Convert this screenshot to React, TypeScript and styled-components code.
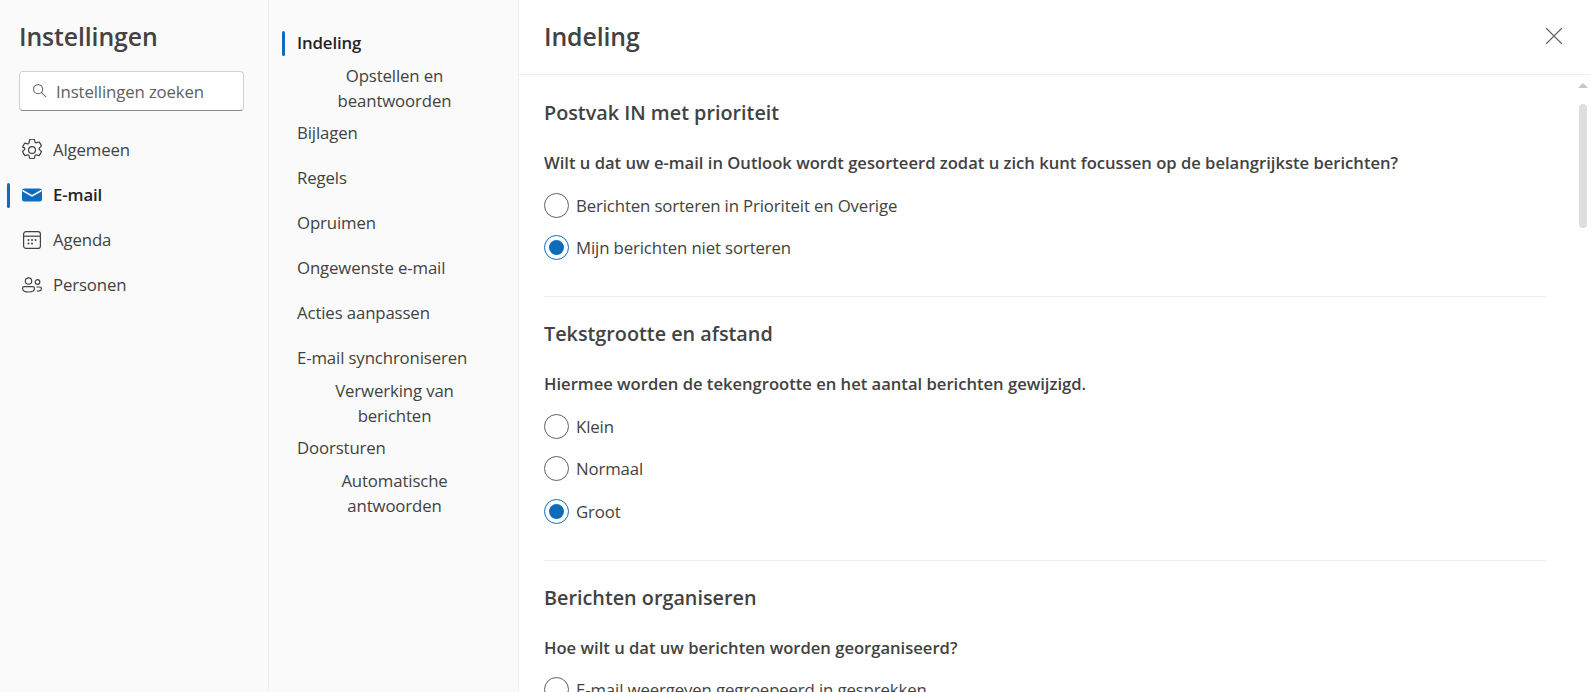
import React from "react";
import styled, { createGlobalStyle } from "styled-components";

const GlobalStyle = createGlobalStyle`
  html, body {
    margin: 0;
    padding: 0;
    height: 100%;
    overflow: hidden;
    background: #fff;
    font-family: "Open Sans", "Noto Sans", "Liberation Sans", sans-serif;
    color: #424242;
  }
  * { box-sizing: border-box; }
`;

const Page = styled.div`
  display: flex;
  width: 1591px;
  height: 692px;
  overflow: hidden;
`;

const Sidebar = styled.aside`
  width: 269px;
  flex-shrink: 0;
  background: #fafafa;
  border-right: 1px solid #eeeeee;
  padding: 19px 0 0 0;
`;

const SidebarTitle = styled.h1`
  margin: 0 0 18px 19px;
  font-size: 24.8px;
  line-height: 34px;
  font-weight: 600;
  color: #424242;
  letter-spacing: -0.1px;
`;

const SearchBox = styled.div`
  margin: 0 0 16px 19px;
  width: 225px;
  height: 40px;
  display: flex;
  align-items: center;
  gap: 9px;
  padding-left: 12px;
  background: #fff;
  border: 1px solid #d1d1d1;
  border-bottom-color: #8a8a8a;
  border-radius: 4px;
`;

const SearchPlaceholder = styled.span`
  font-size: 16.8px;
  letter-spacing: -0.13px;
  color: #616161;
`;

const NavRow = styled.div<{ $active?: boolean }>`
  position: relative;
  height: 45px;
  display: flex;
  align-items: center;
  gap: 10px;
  padding-left: 21px;
  font-size: 16.8px;
  letter-spacing: -0.13px;
  font-weight: ${(p) => (p.$active ? 600 : 400)};
  color: ${(p) => (p.$active ? "#242424" : "#424242")};
`;

const ActiveBar = styled.span<{ $left: number }>`
  position: absolute;
  left: ${(p) => p.$left}px;
  top: 50%;
  width: 3px;
  height: 25px;
  margin-top: -12px;
  border-radius: 2px;
  background: #0f6cbd;
`;

const IconSlot = styled.span`
  width: 22px;
  height: 22px;
  display: flex;
  flex-shrink: 0;
`;

const SubNav = styled.nav`
  width: 250px;
  flex-shrink: 0;
  background: #fafafa;
  border-right: 1px solid #eeeeee;
  padding: 20px 0 0 0;
`;

const SubRow = styled.div<{ $active?: boolean; $wrapped?: boolean }>`
  position: relative;
  width: 225px;
  height: 45px;
  margin-left: 13px;
  padding: ${(p) => (p.$wrapped ? "0 35px" : "0 0 0 15px")};
  display: flex;
  align-items: center;
  justify-content: ${(p) => (p.$wrapped ? "center" : "flex-start")};
  text-align: ${(p) => (p.$wrapped ? "center" : "left")};
  font-size: 16.8px;
  line-height: 25px;
  letter-spacing: -0.13px;
  font-weight: ${(p) => (p.$active ? 600 : 400)};
  color: ${(p) => (p.$active ? "#242424" : "#424242")};
`;

const Main = styled.main`
  flex: 1;
  min-width: 0;
  display: flex;
  flex-direction: column;
`;

const MainHeader = styled.header`
  height: 75px;
  flex-shrink: 0;
  display: flex;
  align-items: center;
  justify-content: space-between;
  padding: 0 27px 3px 25px;
  border-bottom: 1px solid #eeeeee;
`;

const MainTitle = styled.h2`
  margin: 0;
  font-size: 24.8px;
  font-weight: 600;
  letter-spacing: -0.1px;
  color: #424242;
`;

const Body = styled.div`
  flex: 1;
  min-height: 0;
  display: flex;
`;

const Content = styled.div`
  flex: 1;
  min-width: 0;
  overflow: hidden;
  padding: 24px 0 0 25px;
  margin-right: 29px;
`;

const Section = styled.section`
  padding-bottom: 27px;
  margin-bottom: 23px;
  border-bottom: 1px solid #eeeeee;

  &:last-child {
    border-bottom: 0;
  }
`;

const SectionTitle = styled.h3`
  margin: 0 0 24px;
  font-size: 19.8px;
  line-height: 28px;
  font-weight: 600;
  color: #424242;
`;

const Question = styled.p`
  margin: 0 0 9px;
  font-size: 16.6px;
  line-height: 24px;
  font-weight: 600;
  color: #424242;
`;

const Option = styled.label`
  height: 42.5px;
  display: flex;
  align-items: center;
  gap: 7px;
  font-size: 16.8px;
  letter-spacing: -0.13px;
  color: #424242;
`;

const RadioMark = styled.span<{ $checked?: boolean }>`
  width: 25px;
  height: 25px;
  flex-shrink: 0;
  border-radius: 50%;
  display: flex;
  align-items: center;
  justify-content: center;
  border: 1px solid ${(p) => (p.$checked ? "#0f6cbd" : "#616161")};

  &::after {
    content: "";
    display: ${(p) => (p.$checked ? "block" : "none")};
    width: 15px;
    height: 15px;
    border-radius: 50%;
    background: #0f6cbd;
  }
`;

const ScrollTrack = styled.div`
  width: 16px;
  flex-shrink: 0;
  display: flex;
  flex-direction: column;
  align-items: center;
  padding: 8px 4px 0 4px;
`;

const ScrollArrow = styled.span`
  width: 0;
  height: 0;
  flex-shrink: 0;
  border-left: 5px solid transparent;
  border-right: 5px solid transparent;
  border-bottom: 5px solid #c8c8c8;
  margin-bottom: 16px;
`;

const ScrollThumb = styled.span`
  width: 8px;
  height: 124px;
  flex-shrink: 0;
  border-radius: 4px;
  background: #dedede;
`;

const CloseButton = styled.button`
  width: 20px;
  height: 20px;
  padding: 0;
  border: 0;
  background: none;
  display: flex;
`;

const SearchIcon = () => (
  <svg width="15" height="15" viewBox="0 1 16 16" fill="none" stroke="#616161" strokeWidth="1.1">
    <circle cx="6.5" cy="6.5" r="4.8" />
    <path d="M10 10l4.6 4.6" strokeLinecap="round" />
  </svg>
);

const GearIcon = () => (
  <svg width="22" height="22" viewBox="2 1.500 18 19" fill="none" stroke="#424242" strokeWidth="1.050" strokeLinejoin="round">
    <path d="M9 1.800c1.300-.3 2.700-.3 4 0l.6 2.200c.1.500.8.900 1.300.7l2.200-.6c.9 1 1.600 2.200 2 3.500l-1.600 1.600c-.4.400-.4 1.100 0 1.500l1.600 1.600c-.4 1.300-1.100 2.500-2 3.500l-2.200-.6c-.5-.2-1.200.2-1.300.7l-.6 2.200c-1.300.3-2.700.3-4 0l-.6-2.200c-.1-.5-.8-.9-1.300-.7l-2.200.6c-.9-1-1.600-2.200-2-3.500l1.600-1.600c.4-.4.400-1.100 0-1.500L2.900 8.600c.4-1.300 1.100-2.500 2-3.500l2.200.6c.5.200 1.200-.2 1.300-.7z" />
    <circle cx="11" cy="11" r="3" />
  </svg>
);

const MailIcon = () => (
  <svg width="22" height="22" viewBox="0 0 22 22">
    <path d="M1 5.500A2.500 2.500 0 0 1 3.500 3h15A2.500 2.500 0 0 1 21 5.500v8a2.500 2.500 0 0 1-2.500 2.500h-15A2.500 2.500 0 0 1 1 13.500z" transform="translate(0 1.500)" fill="#0f6cbd" />
    <path d="M1.500 6.500L11 11.800l9.500-5.300" fill="none" stroke="#fff" strokeWidth="1.500" />
  </svg>
);

const CalendarIcon = () => (
  <svg width="22" height="22" viewBox="0 0 22 22" fill="none" stroke="#424242" strokeWidth="1.200">
    <rect x="2.600" y="2.600" width="16.800" height="16.800" rx="2.500" />
    <path d="M3 7.200h16" />
    <g fill="#424242" stroke="none">
      <circle cx="7.500" cy="11" r="1" />
      <circle cx="11" cy="11" r="1" />
      <circle cx="14.500" cy="11" r="1" />
      <circle cx="7.500" cy="14.500" r="1" />
      <circle cx="11" cy="14.500" r="1" />
    </g>
  </svg>
);

const PeopleIcon = () => (
  <svg width="22" height="22" viewBox="0 0 22 22" fill="none" stroke="#424242" strokeWidth="1.200">
    <circle cx="7.500" cy="7" r="3.200" />
    <path d="M1.500 14.500c0-1 .8-1.800 1.800-1.800h8.400c1 0 1.800.8 1.800 1.800 0 2.300-2.500 3.500-6 3.500s-6-1.200-6-3.500z" />
    <circle cx="16.500" cy="8" r="2.300" />
    <path d="M15.500 13h3.300c1 0 1.700.7 1.700 1.600 0 1.700-1.700 2.600-4.500 2.600" />
  </svg>
);

const CloseIcon = () => (
  <svg width="20" height="20" viewBox="0 0 20 20" stroke="#616161" strokeWidth="1.100" strokeLinecap="round">
    <path d="M2.500 2.500l15 15M17.500 2.500l-15 15" />
  </svg>
);

const mainNav = [
  { label: "Algemeen", icon: <GearIcon /> },
  { label: "E-mail", icon: <MailIcon />, active: true },
  { label: "Agenda", icon: <CalendarIcon /> },
  { label: "Personen", icon: <PeopleIcon /> },
];

const subNav = [
  { label: "Indeling", active: true },
  { label: "Opstellen en beantwoorden", wrapped: true },
  { label: "Bijlagen" },
  { label: "Regels" },
  { label: "Opruimen" },
  { label: "Ongewenste e-mail" },
  { label: "Acties aanpassen" },
  { label: "E-mail synchroniseren" },
  { label: "Verwerking van berichten", wrapped: true },
  { label: "Doorsturen" },
  { label: "Automatische antwoorden", wrapped: true },
];

const sections = [
  {
    title: "Postvak IN met prioriteit",
    question: "Wilt u dat uw e-mail in Outlook wordt gesorteerd zodat u zich kunt focussen op de belangrijkste berichten?",
    options: [
      { label: "Berichten sorteren in Prioriteit en Overige" },
      { label: "Mijn berichten niet sorteren", checked: true },
    ],
  },
  {
    title: "Tekstgrootte en afstand",
    question: "Hiermee worden de tekengrootte en het aantal berichten gewijzigd.",
    options: [{ label: "Klein" }, { label: "Normaal" }, { label: "Groot", checked: true }],
  },
  {
    title: "Berichten organiseren",
    question: "Hoe wilt u dat uw berichten worden georganiseerd?",
    options: [{ label: "E-mail weergeven gegroepeerd in gesprekken" }],
  },
];

export default function App() {
  return (
    <Page>
      <GlobalStyle />
      <Sidebar>
        <SidebarTitle>Instellingen</SidebarTitle>
        <SearchBox>
          <SearchIcon />
          <SearchPlaceholder>Instellingen zoeken</SearchPlaceholder>
        </SearchBox>
        {mainNav.map((item) => (
          <NavRow key={item.label} $active={item.active}>
            {item.active && <ActiveBar $left={7} />}
            <IconSlot>{item.icon}</IconSlot>
            {item.label}
          </NavRow>
        ))}
      </Sidebar>
      <SubNav>
        {subNav.map((item) => (
          <SubRow key={item.label} $active={item.active} $wrapped={item.wrapped}>
            {item.active && <ActiveBar $left={0} />}
            {item.label}
          </SubRow>
        ))}
      </SubNav>
      <Main>
        <MainHeader>
          <MainTitle>Indeling</MainTitle>
          <CloseButton>
            <CloseIcon />
          </CloseButton>
        </MainHeader>
        <Body>
          <Content>
            {sections.map((section) => (
              <Section key={section.title}>
                <SectionTitle>{section.title}</SectionTitle>
                <Question>{section.question}</Question>
                {section.options.map((option) => (
                  <Option key={option.label}>
                    <RadioMark $checked={option.checked} />
                    {option.label}
                  </Option>
                ))}
              </Section>
            ))}
          </Content>
          <ScrollTrack>
            <ScrollArrow />
            <ScrollThumb />
          </ScrollTrack>
        </Body>
      </Main>
    </Page>
  );
}
